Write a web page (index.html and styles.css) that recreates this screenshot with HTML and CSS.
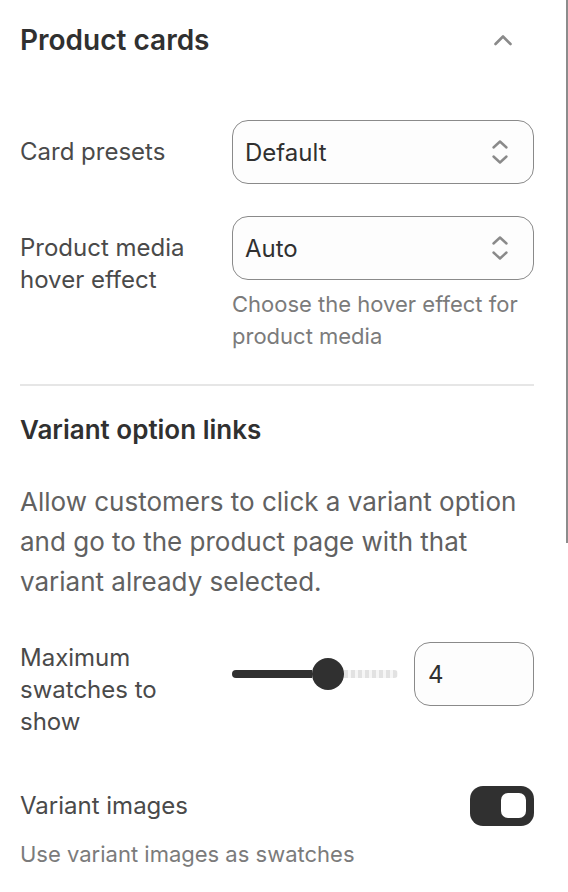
FILE: index.html
```html
<!DOCTYPE html>
<html lang="en">

<head>
    <meta charset="UTF-8">
    <meta name="viewport" content="width=device-width, initial-scale=1.0">
    <title>Theme settings</title>
    <link rel="stylesheet" href="styles.css">
</head>

<body>

<div class="panel">
    <!-- Section header -->
    <div class="section-head">
        <h2>Product cards</h2>
        <svg class="collapse-icon" width="20" height="12" viewBox="0 0 20 12">
            <path d="M2.5 10 L10 2.5 L17.5 10" fill="none" stroke="#8a8a8a" stroke-width="2.6" stroke-linecap="round" stroke-linejoin="round"/>
        </svg>
    </div>

    <div class="field-row">
        <label class="field-label" for="cardPreset">Card presets</label>
        <div class="select" id="cardPreset">
            <span>Default</span>
            <svg class="select-icon" width="20" height="28" viewBox="0 0 20 28">
                <path d="M3.5 9.5 L10 3.5 L16.5 9.5 M3.5 18.5 L10 24.5 L16.5 18.5" fill="none" stroke="#8a8a8a" stroke-width="2.4" stroke-linecap="round" stroke-linejoin="round"/>
            </svg>
        </div>
    </div>

    <div class="field-row">
        <label class="field-label" for="hoverEffect">Product media hover effect</label>
        <div>
            <div class="select" id="hoverEffect">
                <span>Auto</span>
                <svg class="select-icon" width="20" height="28" viewBox="0 0 20 28">
                    <path d="M3.5 9.5 L10 3.5 L16.5 9.5 M3.5 18.5 L10 24.5 L16.5 18.5" fill="none" stroke="#8a8a8a" stroke-width="2.4" stroke-linecap="round" stroke-linejoin="round"/>
                </svg>
            </div>
            <p class="help">Choose the hover effect for product media</p>
        </div>
    </div>

    <div class="divider"></div>

    <h3>Variant option links</h3>
    <p class="desc">Allow customers to click a variant option and go to the product page with that variant already selected.</p>

    <div class="field-row top">
        <label class="field-label" for="maxSwatches">Maximum swatches to show</label>
        <div class="range-row">
            <div class="range">
                <div class="range-fill"></div>
                <div class="range-thumb"></div>
                <div class="range-rest"></div>
            </div>
            <div class="number-input" id="maxSwatches">4</div>
        </div>
    </div>

    <div class="toggle-row">
        <span class="field-label">Variant images</span>
        <div class="toggle on"><div class="toggle-knob"></div></div>
    </div>
    <p class="help">Use variant images as swatches</p>
</div>

<div class="scroll-thumb"></div>

</body>

</html>
```

FILE: styles.css
```css
body {
    margin: 0;
    background: #fff;
    font-family: Inter, "Noto Sans", sans-serif;
    color: #303030;
    position: relative;
    overflow: hidden;
}

.panel {
    padding: 24px 34px 0 20px;
}

.section-head {
    display: flex;
    align-items: center;
    justify-content: space-between;
    height: 32px;
    margin-bottom: 64px;
}

.section-head h2 {
    margin: 0;
    font-size: 28px;
    font-weight: 600;
    line-height: 32px;
}

.collapse-icon {
    margin-right: 21px;
}

.field-row {
    display: grid;
    grid-template-columns: 212px 1fr;
    margin-bottom: 32px;
}

.field-label {
    font-size: 24px;
    line-height: 32px;
    color: #4a4a4a;
    padding-top: 16px;
    padding-right: 20px;
}

.field-row.top .field-label {
    padding-top: 0;
}

.select {
    display: flex;
    align-items: center;
    justify-content: space-between;
    height: 64px;
    box-sizing: border-box;
    padding: 0 23px 0 12px;
    border: 1px solid #8a8a8a;
    border-radius: 16px;
    background: #fdfdfd;
    font-size: 24px;
}

.help {
    margin: 8px 0 0;
    font-size: 22px;
    line-height: 32px;
    color: #7b7b7b;
}

.divider {
    height: 2px;
    background: #e6e6e6;
    margin-top: 0;
    margin-bottom: 28px;
}

h3 {
    margin: 0;
    font-size: 26px;
    font-weight: 600;
    line-height: 32px;
}

.desc {
    margin: 36px 0 40px;
    font-size: 26px;
    line-height: 40px;
    color: #616161;
}

.range-row {
    display: flex;
    align-items: center;
    gap: 16px;
    height: 64px;
}

.range {
    flex: 1;
    display: flex;
    align-items: center;
}

.range-fill {
    width: 80px;
    height: 8px;
    background: #303030;
    border-radius: 4px 0 0 4px;
}

.range-thumb {
    width: 32px;
    height: 32px;
    border-radius: 50%;
    background: #303030;
}

.range-rest {
    flex: 1;
    height: 8px;
    border-radius: 0 4px 4px 0;
    background: repeating-linear-gradient(90deg, #e2e2e2 0 4px, #f6f6f6 4px 7px);
}

.number-input {
    width: 120px;
    height: 64px;
    box-sizing: border-box;
    padding-left: 13px;
    display: flex;
    align-items: center;
    border: 1px solid #8a8a8a;
    border-radius: 16px;
    background: #fdfdfd;
    font-size: 24px;
}

.toggle-row {
    display: flex;
    align-items: center;
    justify-content: space-between;
    margin-top: 48px;
}

.toggle-row .field-label {
    padding-top: 0;
}

.toggle {
    width: 64px;
    height: 40px;
    box-sizing: border-box;
    padding: 7px 8px;
    border-radius: 13px;
    background: #e3e3e3;
    display: flex;
}

.toggle.on {
    background: #303030;
    justify-content: flex-end;
}

.toggle-knob {
    width: 25px;
    height: 25px;
    border-radius: 7px;
    background: #fff;
}

.toggle-row + .help {
    margin-top: 12px;
}

/* scrollbar thumb on the panel edge */
.scroll-thumb {
    position: absolute;
    top: 0;
    right: 0;
    width: 2px;
    height: 543px;
    background: #8c8c8c;
}
```
